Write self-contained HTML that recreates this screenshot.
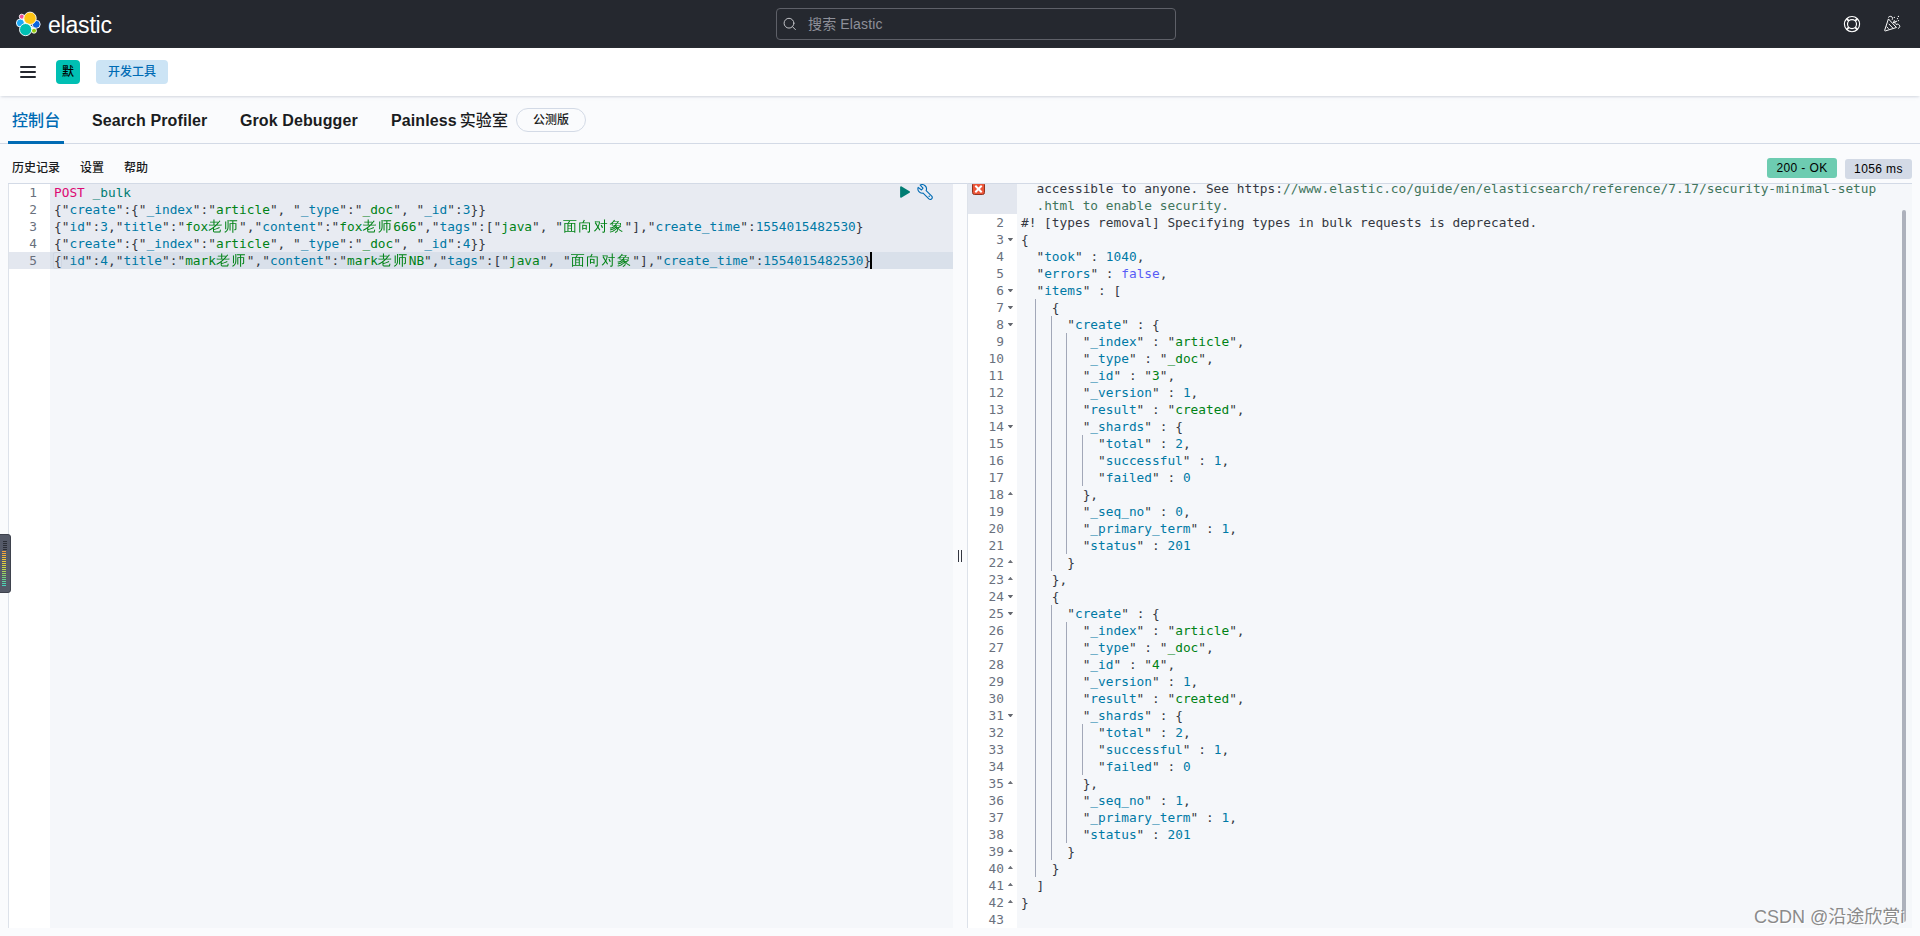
<!DOCTYPE html>
<html lang="zh-CN">
<head>
<meta charset="utf-8">
<title>控制台 - 开发工具 - Elastic</title>
<style>
*{box-sizing:border-box;margin:0;padding:0}
html,body{width:1920px;height:936px;overflow:hidden}
body{background:#FAFBFD;font-family:"Liberation Sans","Noto Sans CJK SC",sans-serif;color:#343741;position:relative;font-size:14px}
.abs{position:absolute}
/* top header */
#hdr{position:absolute;left:0;top:0;width:1920px;height:48px;background:#25282F}
#logo{position:absolute;left:14px;top:10px;width:28px;height:28px}
#word{position:absolute;left:48px;top:10px;font-size:23px;line-height:30px;color:#fff;letter-spacing:-0.2px;font-weight:400}
#search{position:absolute;left:776px;top:8px;width:400px;height:32px;border:1px solid #5E6068;border-radius:4px;background:#25282F}
#search svg{position:absolute;left:5px;top:7px}
#search span{position:absolute;left:31px;top:0;line-height:30px;font-size:14px;color:#8E9099;letter-spacing:0.15px}
/* second bar */
#bar{position:absolute;left:0;top:48px;width:1920px;height:48px;background:#fff;box-shadow:0 2px 2px -1px rgba(152,162,179,.3),0 1px 5px -2px rgba(152,162,179,.3)}
#burger i{position:absolute;left:20px;width:16px;height:2px;background:#25282F;border-radius:1px}
#avatar{position:absolute;left:56px;top:12px;width:24px;height:24px;border-radius:4px;background:#00BFB3;color:#000;font-size:12px;line-height:24px;text-align:center;font-weight:500}
#crumb{position:absolute;left:96px;top:12px;width:72px;height:24px;border-radius:4px;background:#CCE4F5;color:#006BB4;font-size:12px;line-height:24px;text-align:center;font-weight:500}
/* tabs */
#tabs{position:absolute;left:0;top:96px;width:1920px;height:48px;border-bottom:1px solid #D3DAE6}
.tab{position:absolute;top:13px;letter-spacing:0.1px;font-size:16px;line-height:24px;font-weight:700;color:#1A1C21;white-space:nowrap}
#tab1{left:12px;color:#006BB4;font-weight:500}
#tabline{position:absolute;left:8px;top:45px;width:56px;height:3px;background:#006BB4}
#beta{position:absolute;left:516px;top:12px;width:70px;height:24px;border:1px solid #D3DAE6;border-radius:12px;font-size:12px;line-height:22px;text-align:center;font-weight:500;color:#1A1C21}
/* toolbar */
.tb{position:absolute;top:159px;font-size:12px;line-height:18px;font-weight:500;color:#1A1C21;white-space:nowrap}
.badge{position:absolute;letter-spacing:0.4px;height:20px;border-radius:3px;font-size:12px;line-height:20px;text-align:center;color:#000;font-weight:500;white-space:nowrap}
/* editors */
.ed{position:absolute;top:183px;height:745px;overflow:hidden;background:#F5F7FA;border-top:1px solid #D3DAE6;border-left:1px solid #DDE2EA}
.gut{position:absolute;left:0;top:0;bottom:0;background:#fff;overflow:hidden}
.gc{position:absolute;left:0;right:0;height:17px;line-height:17px;text-align:right;padding-right:13px;color:#69707D;font-family:"DejaVu Sans Mono","Liberation Mono",monospace;font-size:12.8px}
.gc.act{background:#E3E7EF}
.cnt{position:absolute;top:0;bottom:0;overflow:hidden}
.ln{position:absolute;left:4px;height:17px;line-height:17px;white-space:pre;font-family:"DejaVu Sans Mono","Liberation Mono","Noto Sans CJK SC",monospace;font-size:12.8px;color:#343741}
.cj{display:inline-block;width:15.412px;text-align:left;font-family:"WenQuanYi Zen Hei","Noto Sans CJK SC",sans-serif;font-size:14px;line-height:17px;vertical-align:top}
.m{color:#DD0A73}.u{color:#017D73}.v{color:#0079A5}.s{color:#008216}.n{color:#0079A5}.b{color:#585CF6}.p,.q,.w{color:#343741}.c{color:#41755C}
.hl{position:absolute;left:0;right:0;background:#E8EBF2}
.al{position:absolute;left:0;right:0;background:#D9E0EA}
.ig{position:absolute;width:1px;background:#A2A8B8}
.fo,.fc{position:absolute;right:3.8px;top:7px;width:5.6px;height:3.4px;background:#64676E}
.fo{clip-path:polygon(0 0,100% 0,50% 100%)}
.fc{clip-path:polygon(0 100%,100% 100%,50% 0);top:5.8px;background:#6E7178}
.err{position:absolute;left:4px;top:19px;width:13px;height:13px;border-radius:2.5px;background:#EC5538;border:1px solid #8F3320}
.err:before,.err:after{content:"";position:absolute;left:1px;top:4.5px;width:9px;height:2px;background:#fff;transform:rotate(45deg)}
.err:after{transform:rotate(-45deg)}
#meter{position:absolute;left:-3px;top:534px;width:14px;height:59px;background:#555A68;border-radius:3px;border:1px solid #3E424D}
#meter i{position:absolute;height:1px}
#wm{position:absolute;left:1754px;top:906px;font-size:18px;line-height:22px;color:#8A8A8A;white-space:nowrap;text-shadow:1px 1px 0 #fff;font-family:"Liberation Sans","Noto Sans CJK SC",sans-serif}
</style>
</head>
<body>
<div id="hdr">
  <svg id="logo" viewBox="14 10 28 28" stroke="#fff" stroke-width="0.9">
    <path d="M22 17 L34 30 L26 30 L20 23 Z M30 18 L36 24 L34 31" fill="#fff" stroke-width="2"/>
    <circle cx="21.8" cy="16.7" r="2.5" fill="#F04E98"/>
    <circle cx="34" cy="30.7" r="2.5" fill="#93C90E"/>
    <circle cx="20.4" cy="23" r="4" fill="#1BA9F5"/>
    <circle cx="36.2" cy="24.3" r="4" fill="#0B64DD"/>
    <circle cx="30" cy="18.3" r="6.2" fill="#FEC514"/>
    <circle cx="25.6" cy="29.6" r="6.1" fill="#00BFB3"/>
  </svg>
  <div id="word">elastic</div>
  <div id="search">
    <svg width="16" height="16" viewBox="0 0 16 16" fill="none" stroke="#C2C3C7" stroke-width="1" stroke-linecap="round"><circle cx="7" cy="7.2" r="4.9"/><path d="M10.6 10.8 L13.4 13.6"/></svg>
    <span>搜索 Elastic</span>
  </div>
  <svg class="abs" style="left:1843px;top:15px" width="18" height="18" viewBox="-1 -1 18 18" fill="none" stroke="#fff">
    <circle cx="8" cy="8.1" r="7.6" stroke-width="1.15"/><circle cx="8" cy="8.1" r="4.5" stroke-width="1.15"/>
    <path d="M2.8 2.9l2 2M13.2 2.9l-2 2M2.8 13.3l2-2M13.2 13.3l-2-2" stroke-width="1.9"/>
  </svg>
  <svg class="abs" style="left:1883px;top:15px" width="18" height="18" viewBox="-1 -1 18 18" fill="none" stroke="#fff" stroke-width="1" stroke-linecap="round" stroke-linejoin="round">
    <path d="M4.3 3.3 L0.7 14.2 Q0.5 15.1 1.5 14.9 L12.1 11.6 Z"/>
    <path d="M5 8.1 L8.6 11.8 M2.9 11 L4.4 12.5"/>
    <path d="M4.4 1.2 C5.4 -0.2 8.2 0 8.5 1.9 C8.6 2.8 8.3 3.5 8.3 3.5"/>
    <path d="M12.2 8.3 C13.6 7.5 15.8 8.6 15.8 10.3 C15.8 11.3 14.9 12.2 14.3 12.4"/>
    <path d="M9.5 6.5 L12.8 5.2 M9.5 6.5 L10.3 4.6 M9.5 6.5 L11.6 7.1"/>
    <path d="M10.3 1.4v.01M14.4 .4v.01M13.5 2.5v.01M14.5 4.5v.01" stroke-width="1.25"/>
  </svg>
</div>
<div id="bar">
  <div id="burger"><i style="top:18px"></i><i style="top:23px"></i><i style="top:28px"></i></div>
  <div id="avatar">默</div>
  <div id="crumb">开发工具</div>
</div>
<div id="tabs">
  <div class="tab" id="tab1">控制台</div>
  <div class="tab" style="left:92px">Search Profiler</div>
  <div class="tab" style="left:240px">Grok Debugger</div>
  <div class="tab" style="left:391px;word-spacing:-1.6px">Painless <span style="font-weight:500">实验室</span></div>
  <div id="beta">公测版</div>
  <div id="tabline"></div>
</div>
<div class="tb" style="left:12px">历史记录</div>
<div class="tb" style="left:80px">设置</div>
<div class="tb" style="left:124px">帮助</div>
<div class="badge" style="left:1767px;top:158px;width:70px;background:#6DCCB1">200 - OK</div>
<div class="badge" style="left:1845px;top:159px;width:67px;background:#D3DAE6">1056 ms</div>

<!-- left editor -->
<div class="ed" id="edL" style="left:8px;width:945px">
  <div class="gut" style="width:41px">
    <div class="gc act" style="top:68px"></div>
<div class="gc" style="top:0px">1</div>
<div class="gc" style="top:17px">2</div>
<div class="gc" style="top:34px">3</div>
<div class="gc" style="top:51px">4</div>
<div class="gc" style="top:68px">5</div>
  </div>
  <div class="cnt" style="left:41px;right:0">
    <div class="hl" style="top:0;height:85px"></div>
    <div class="al" style="top:68px;height:17px"></div>
    <i class="abs" style="left:3px;top:68px;width:9px;height:17px;border:1px solid #D0D7E3;border-radius:2px;background:#DCE2EB"></i>
<div class="ln" style="top:0px"><span class="m">POST</span> <span class="u">_bulk</span></div>
<div class="ln" style="top:17px"><span class="p">{</span><span class="q">"</span><span class="v">create</span><span class="q">"</span><span class="p">:</span><span class="p">{</span><span class="q">"</span><span class="v">_index</span><span class="q">"</span><span class="p">:</span><span class="q">"</span><span class="s">article</span><span class="q">"</span><span class="p">,</span> <span class="q">"</span><span class="v">_type</span><span class="q">"</span><span class="p">:</span><span class="q">"</span><span class="s">_doc</span><span class="q">"</span><span class="p">,</span> <span class="q">"</span><span class="v">_id</span><span class="q">"</span><span class="p">:</span><span class="n">3</span><span class="p">}</span><span class="p">}</span></div>
<div class="ln" style="top:34px"><span class="p">{</span><span class="q">"</span><span class="v">id</span><span class="q">"</span><span class="p">:</span><span class="n">3</span><span class="p">,</span><span class="q">"</span><span class="v">title</span><span class="q">"</span><span class="p">:</span><span class="q">"</span><span class="s">fox<span class="cj">老</span><span class="cj">师</span></span><span class="q">"</span><span class="p">,</span><span class="q">"</span><span class="v">content</span><span class="q">"</span><span class="p">:</span><span class="q">"</span><span class="s">fox<span class="cj">老</span><span class="cj">师</span>666</span><span class="q">"</span><span class="p">,</span><span class="q">"</span><span class="v">tags</span><span class="q">"</span><span class="p">:</span><span class="p">[</span><span class="q">"</span><span class="s">java</span><span class="q">"</span><span class="p">,</span> <span class="q">"</span><span class="s"><span class="cj">面</span><span class="cj">向</span><span class="cj">对</span><span class="cj">象</span></span><span class="q">"</span><span class="p">]</span><span class="p">,</span><span class="q">"</span><span class="v">create_time</span><span class="q">"</span><span class="p">:</span><span class="n">1554015482530</span><span class="p">}</span></div>
<div class="ln" style="top:51px"><span class="p">{</span><span class="q">"</span><span class="v">create</span><span class="q">"</span><span class="p">:</span><span class="p">{</span><span class="q">"</span><span class="v">_index</span><span class="q">"</span><span class="p">:</span><span class="q">"</span><span class="s">article</span><span class="q">"</span><span class="p">,</span> <span class="q">"</span><span class="v">_type</span><span class="q">"</span><span class="p">:</span><span class="q">"</span><span class="s">_doc</span><span class="q">"</span><span class="p">,</span> <span class="q">"</span><span class="v">_id</span><span class="q">"</span><span class="p">:</span><span class="n">4</span><span class="p">}</span><span class="p">}</span></div>
<div class="ln" style="top:68px"><span class="p">{</span><span class="q">"</span><span class="v">id</span><span class="q">"</span><span class="p">:</span><span class="n">4</span><span class="p">,</span><span class="q">"</span><span class="v">title</span><span class="q">"</span><span class="p">:</span><span class="q">"</span><span class="s">mark<span class="cj">老</span><span class="cj">师</span></span><span class="q">"</span><span class="p">,</span><span class="q">"</span><span class="v">content</span><span class="q">"</span><span class="p">:</span><span class="q">"</span><span class="s">mark<span class="cj">老</span><span class="cj">师</span>NB</span><span class="q">"</span><span class="p">,</span><span class="q">"</span><span class="v">tags</span><span class="q">"</span><span class="p">:</span><span class="p">[</span><span class="q">"</span><span class="s">java</span><span class="q">"</span><span class="p">,</span> <span class="q">"</span><span class="s"><span class="cj">面</span><span class="cj">向</span><span class="cj">对</span><span class="cj">象</span></span><span class="q">"</span><span class="p">]</span><span class="p">,</span><span class="q">"</span><span class="v">create_time</span><span class="q">"</span><span class="p">:</span><span class="n">1554015482530</span><span class="p">}</span></div>
    <i class="abs" style="left:820px;top:68px;width:2px;height:17px;background:#000"></i>
    <svg class="abs" style="left:848px;top:0" width="14" height="17" viewBox="898 184 14 17"><path d="M901.1 187.3 L909 192 L901.1 196.7 Z" fill="#017D73" stroke="#017D73" stroke-width="2" stroke-linejoin="round"/></svg>
    <svg class="abs" style="left:867px;top:0" width="17" height="17" viewBox="0 0 17 17" fill="none" stroke="#006BB4" stroke-width="1.1" stroke-linejoin="round">
      <path d="M3.19 1.10 L6 4.2 L4.5 6 L1.17 3.39 A4.3 4.3 0 0 0 6.08 9.11 L11.89 14.91 A2 2 0 0 0 14.71 12.09 L9.17 6.54 A4.3 4.3 0 0 0 3.19 1.10 Z"/>
      <circle cx="12.2" cy="12.2" r="0.75" fill="#006BB4" stroke="none"/>
    </svg>
  </div>
</div>
<!-- splitter -->
<i class="abs" style="left:8px;top:183px;width:1904px;height:1px;background:#D3DAE6"></i>
<i class="abs" style="left:958px;top:550px;width:1px;height:12px;background:#343741"></i>
<i class="abs" style="left:961px;top:550px;width:1px;height:12px;background:#343741"></i>
<!-- right editor -->
<div class="ed" id="edR" style="left:967px;width:945px">
  <div class="gut" style="width:49px">
<div class="gc act" style="top:-21px;height:51px"><i class="err"></i></div>
<div class="gc" style="top:30px">2</div>
<div class="gc" style="top:47px">3<i class="fo"></i></div>
<div class="gc" style="top:64px">4</div>
<div class="gc" style="top:81px">5</div>
<div class="gc" style="top:98px">6<i class="fo"></i></div>
<div class="gc" style="top:115px">7<i class="fo"></i></div>
<div class="gc" style="top:132px">8<i class="fo"></i></div>
<div class="gc" style="top:149px">9</div>
<div class="gc" style="top:166px">10</div>
<div class="gc" style="top:183px">11</div>
<div class="gc" style="top:200px">12</div>
<div class="gc" style="top:217px">13</div>
<div class="gc" style="top:234px">14<i class="fo"></i></div>
<div class="gc" style="top:251px">15</div>
<div class="gc" style="top:268px">16</div>
<div class="gc" style="top:285px">17</div>
<div class="gc" style="top:302px">18<i class="fc"></i></div>
<div class="gc" style="top:319px">19</div>
<div class="gc" style="top:336px">20</div>
<div class="gc" style="top:353px">21</div>
<div class="gc" style="top:370px">22<i class="fc"></i></div>
<div class="gc" style="top:387px">23<i class="fc"></i></div>
<div class="gc" style="top:404px">24<i class="fo"></i></div>
<div class="gc" style="top:421px">25<i class="fo"></i></div>
<div class="gc" style="top:438px">26</div>
<div class="gc" style="top:455px">27</div>
<div class="gc" style="top:472px">28</div>
<div class="gc" style="top:489px">29</div>
<div class="gc" style="top:506px">30</div>
<div class="gc" style="top:523px">31<i class="fo"></i></div>
<div class="gc" style="top:540px">32</div>
<div class="gc" style="top:557px">33</div>
<div class="gc" style="top:574px">34</div>
<div class="gc" style="top:591px">35<i class="fc"></i></div>
<div class="gc" style="top:608px">36</div>
<div class="gc" style="top:625px">37</div>
<div class="gc" style="top:642px">38</div>
<div class="gc" style="top:659px">39<i class="fc"></i></div>
<div class="gc" style="top:676px">40<i class="fc"></i></div>
<div class="gc" style="top:693px">41<i class="fc"></i></div>
<div class="gc" style="top:710px">42<i class="fc"></i></div>
<div class="gc" style="top:727px">43</div>
  </div>
  <div class="cnt" style="left:49px;right:0">
<i class="ig" style="left:18.41px;top:115px;height:578px"></i>
<i class="ig" style="left:33.82px;top:132px;height:255px"></i>
<i class="ig" style="left:33.82px;top:421px;height:255px"></i>
<i class="ig" style="left:49.24px;top:149px;height:221px"></i>
<i class="ig" style="left:49.24px;top:438px;height:221px"></i>
<i class="ig" style="left:64.65px;top:251px;height:51px"></i>
<i class="ig" style="left:64.65px;top:540px;height:51px"></i>
<div class="ln" style="top:-21px"><span class="w">#! Elasticsearch built-in security features are not enabled. Without authentication, your cluster could be</span></div>
<div class="ln" style="top:-4px">  <span class="w">accessible to anyone. See https:</span><span class="c">//www.elastic.co/guide/en/elasticsearch/reference/7.17/security-minimal-setup</span></div>
<div class="ln" style="top:13px">  <span class="c">.html to enable security.</span></div>
<div class="ln" style="top:30px"><span class="w">#! [types removal] Specifying types in bulk requests is deprecated.</span></div>
<div class="ln" style="top:47px"><span class="p">{</span></div>
<div class="ln" style="top:64px">  <span class="q">"</span><span class="v">took</span><span class="q">"</span> <span class="p">:</span> <span class="n">1040</span><span class="p">,</span></div>
<div class="ln" style="top:81px">  <span class="q">"</span><span class="v">errors</span><span class="q">"</span> <span class="p">:</span> <span class="b">false</span><span class="p">,</span></div>
<div class="ln" style="top:98px">  <span class="q">"</span><span class="v">items</span><span class="q">"</span> <span class="p">:</span> <span class="p">[</span></div>
<div class="ln" style="top:115px">    <span class="p">{</span></div>
<div class="ln" style="top:132px">      <span class="q">"</span><span class="v">create</span><span class="q">"</span> <span class="p">:</span> <span class="p">{</span></div>
<div class="ln" style="top:149px">        <span class="q">"</span><span class="v">_index</span><span class="q">"</span> <span class="p">:</span> <span class="q">"</span><span class="s">article</span><span class="q">"</span><span class="p">,</span></div>
<div class="ln" style="top:166px">        <span class="q">"</span><span class="v">_type</span><span class="q">"</span> <span class="p">:</span> <span class="q">"</span><span class="s">_doc</span><span class="q">"</span><span class="p">,</span></div>
<div class="ln" style="top:183px">        <span class="q">"</span><span class="v">_id</span><span class="q">"</span> <span class="p">:</span> <span class="q">"</span><span class="s">3</span><span class="q">"</span><span class="p">,</span></div>
<div class="ln" style="top:200px">        <span class="q">"</span><span class="v">_version</span><span class="q">"</span> <span class="p">:</span> <span class="n">1</span><span class="p">,</span></div>
<div class="ln" style="top:217px">        <span class="q">"</span><span class="v">result</span><span class="q">"</span> <span class="p">:</span> <span class="q">"</span><span class="s">created</span><span class="q">"</span><span class="p">,</span></div>
<div class="ln" style="top:234px">        <span class="q">"</span><span class="v">_shards</span><span class="q">"</span> <span class="p">:</span> <span class="p">{</span></div>
<div class="ln" style="top:251px">          <span class="q">"</span><span class="v">total</span><span class="q">"</span> <span class="p">:</span> <span class="n">2</span><span class="p">,</span></div>
<div class="ln" style="top:268px">          <span class="q">"</span><span class="v">successful</span><span class="q">"</span> <span class="p">:</span> <span class="n">1</span><span class="p">,</span></div>
<div class="ln" style="top:285px">          <span class="q">"</span><span class="v">failed</span><span class="q">"</span> <span class="p">:</span> <span class="n">0</span></div>
<div class="ln" style="top:302px">        <span class="p">}</span><span class="p">,</span></div>
<div class="ln" style="top:319px">        <span class="q">"</span><span class="v">_seq_no</span><span class="q">"</span> <span class="p">:</span> <span class="n">0</span><span class="p">,</span></div>
<div class="ln" style="top:336px">        <span class="q">"</span><span class="v">_primary_term</span><span class="q">"</span> <span class="p">:</span> <span class="n">1</span><span class="p">,</span></div>
<div class="ln" style="top:353px">        <span class="q">"</span><span class="v">status</span><span class="q">"</span> <span class="p">:</span> <span class="n">201</span></div>
<div class="ln" style="top:370px">      <span class="p">}</span></div>
<div class="ln" style="top:387px">    <span class="p">}</span><span class="p">,</span></div>
<div class="ln" style="top:404px">    <span class="p">{</span></div>
<div class="ln" style="top:421px">      <span class="q">"</span><span class="v">create</span><span class="q">"</span> <span class="p">:</span> <span class="p">{</span></div>
<div class="ln" style="top:438px">        <span class="q">"</span><span class="v">_index</span><span class="q">"</span> <span class="p">:</span> <span class="q">"</span><span class="s">article</span><span class="q">"</span><span class="p">,</span></div>
<div class="ln" style="top:455px">        <span class="q">"</span><span class="v">_type</span><span class="q">"</span> <span class="p">:</span> <span class="q">"</span><span class="s">_doc</span><span class="q">"</span><span class="p">,</span></div>
<div class="ln" style="top:472px">        <span class="q">"</span><span class="v">_id</span><span class="q">"</span> <span class="p">:</span> <span class="q">"</span><span class="s">4</span><span class="q">"</span><span class="p">,</span></div>
<div class="ln" style="top:489px">        <span class="q">"</span><span class="v">_version</span><span class="q">"</span> <span class="p">:</span> <span class="n">1</span><span class="p">,</span></div>
<div class="ln" style="top:506px">        <span class="q">"</span><span class="v">result</span><span class="q">"</span> <span class="p">:</span> <span class="q">"</span><span class="s">created</span><span class="q">"</span><span class="p">,</span></div>
<div class="ln" style="top:523px">        <span class="q">"</span><span class="v">_shards</span><span class="q">"</span> <span class="p">:</span> <span class="p">{</span></div>
<div class="ln" style="top:540px">          <span class="q">"</span><span class="v">total</span><span class="q">"</span> <span class="p">:</span> <span class="n">2</span><span class="p">,</span></div>
<div class="ln" style="top:557px">          <span class="q">"</span><span class="v">successful</span><span class="q">"</span> <span class="p">:</span> <span class="n">1</span><span class="p">,</span></div>
<div class="ln" style="top:574px">          <span class="q">"</span><span class="v">failed</span><span class="q">"</span> <span class="p">:</span> <span class="n">0</span></div>
<div class="ln" style="top:591px">        <span class="p">}</span><span class="p">,</span></div>
<div class="ln" style="top:608px">        <span class="q">"</span><span class="v">_seq_no</span><span class="q">"</span> <span class="p">:</span> <span class="n">1</span><span class="p">,</span></div>
<div class="ln" style="top:625px">        <span class="q">"</span><span class="v">_primary_term</span><span class="q">"</span> <span class="p">:</span> <span class="n">1</span><span class="p">,</span></div>
<div class="ln" style="top:642px">        <span class="q">"</span><span class="v">status</span><span class="q">"</span> <span class="p">:</span> <span class="n">201</span></div>
<div class="ln" style="top:659px">      <span class="p">}</span></div>
<div class="ln" style="top:676px">    <span class="p">}</span></div>
<div class="ln" style="top:693px">  <span class="p">]</span></div>
<div class="ln" style="top:710px"><span class="p">}</span></div>
<div class="ln" style="top:727px"></div>
    <i class="abs" style="right:6px;top:26px;width:4px;height:712px;background:#ADB1BC;border-radius:2px"></i>
  </div>
</div>
<!-- left floating widget -->
<div id="meter"><i style="left:5px;top:6px;width:4px;background:#2B2E36"></i><i style="left:5px;top:8px;width:4px;background:#2B2E36"></i><i style="left:5px;top:10px;width:4px;background:#2B2E36"></i><i style="left:5px;top:12px;width:4px;background:#2B2E36"></i><i style="left:5px;top:14px;width:4px;background:#2B2E36"></i><i style="left:4px;top:16px;width:4px;background:#F5A03C"></i><i style="left:4px;top:18px;width:4px;background:#F4A93C"></i><i style="left:4px;top:20px;width:4px;background:#F3B33C"></i><i style="left:4px;top:22px;width:4px;background:#F1BC3C"></i><i style="left:4px;top:24px;width:4px;background:#F0C63C"></i><i style="left:4px;top:26px;width:4px;background:#E9CB3E"></i><i style="left:4px;top:28px;width:4px;background:#E0CE40"></i><i style="left:4px;top:30px;width:4px;background:#D6D242"></i><i style="left:4px;top:32px;width:4px;background:#CDD545"></i><i style="left:4px;top:34px;width:4px;background:#BFD64C"></i><i style="left:4px;top:36px;width:4px;background:#ACD558"></i><i style="left:4px;top:38px;width:4px;background:#99D463"></i><i style="left:4px;top:40px;width:4px;background:#86D36F"></i><i style="left:4px;top:42px;width:4px;background:#75D27C"></i><i style="left:4px;top:44px;width:4px;background:#69D28D"></i><i style="left:4px;top:46px;width:4px;background:#5ED29D"></i><i style="left:4px;top:48px;width:4px;background:#52D2AE"></i><i style="left:4px;top:50px;width:4px;background:#46D2BE"></i></div>
<div id="wm">CSDN @沿途欣赏i</div>
</body>
</html>
